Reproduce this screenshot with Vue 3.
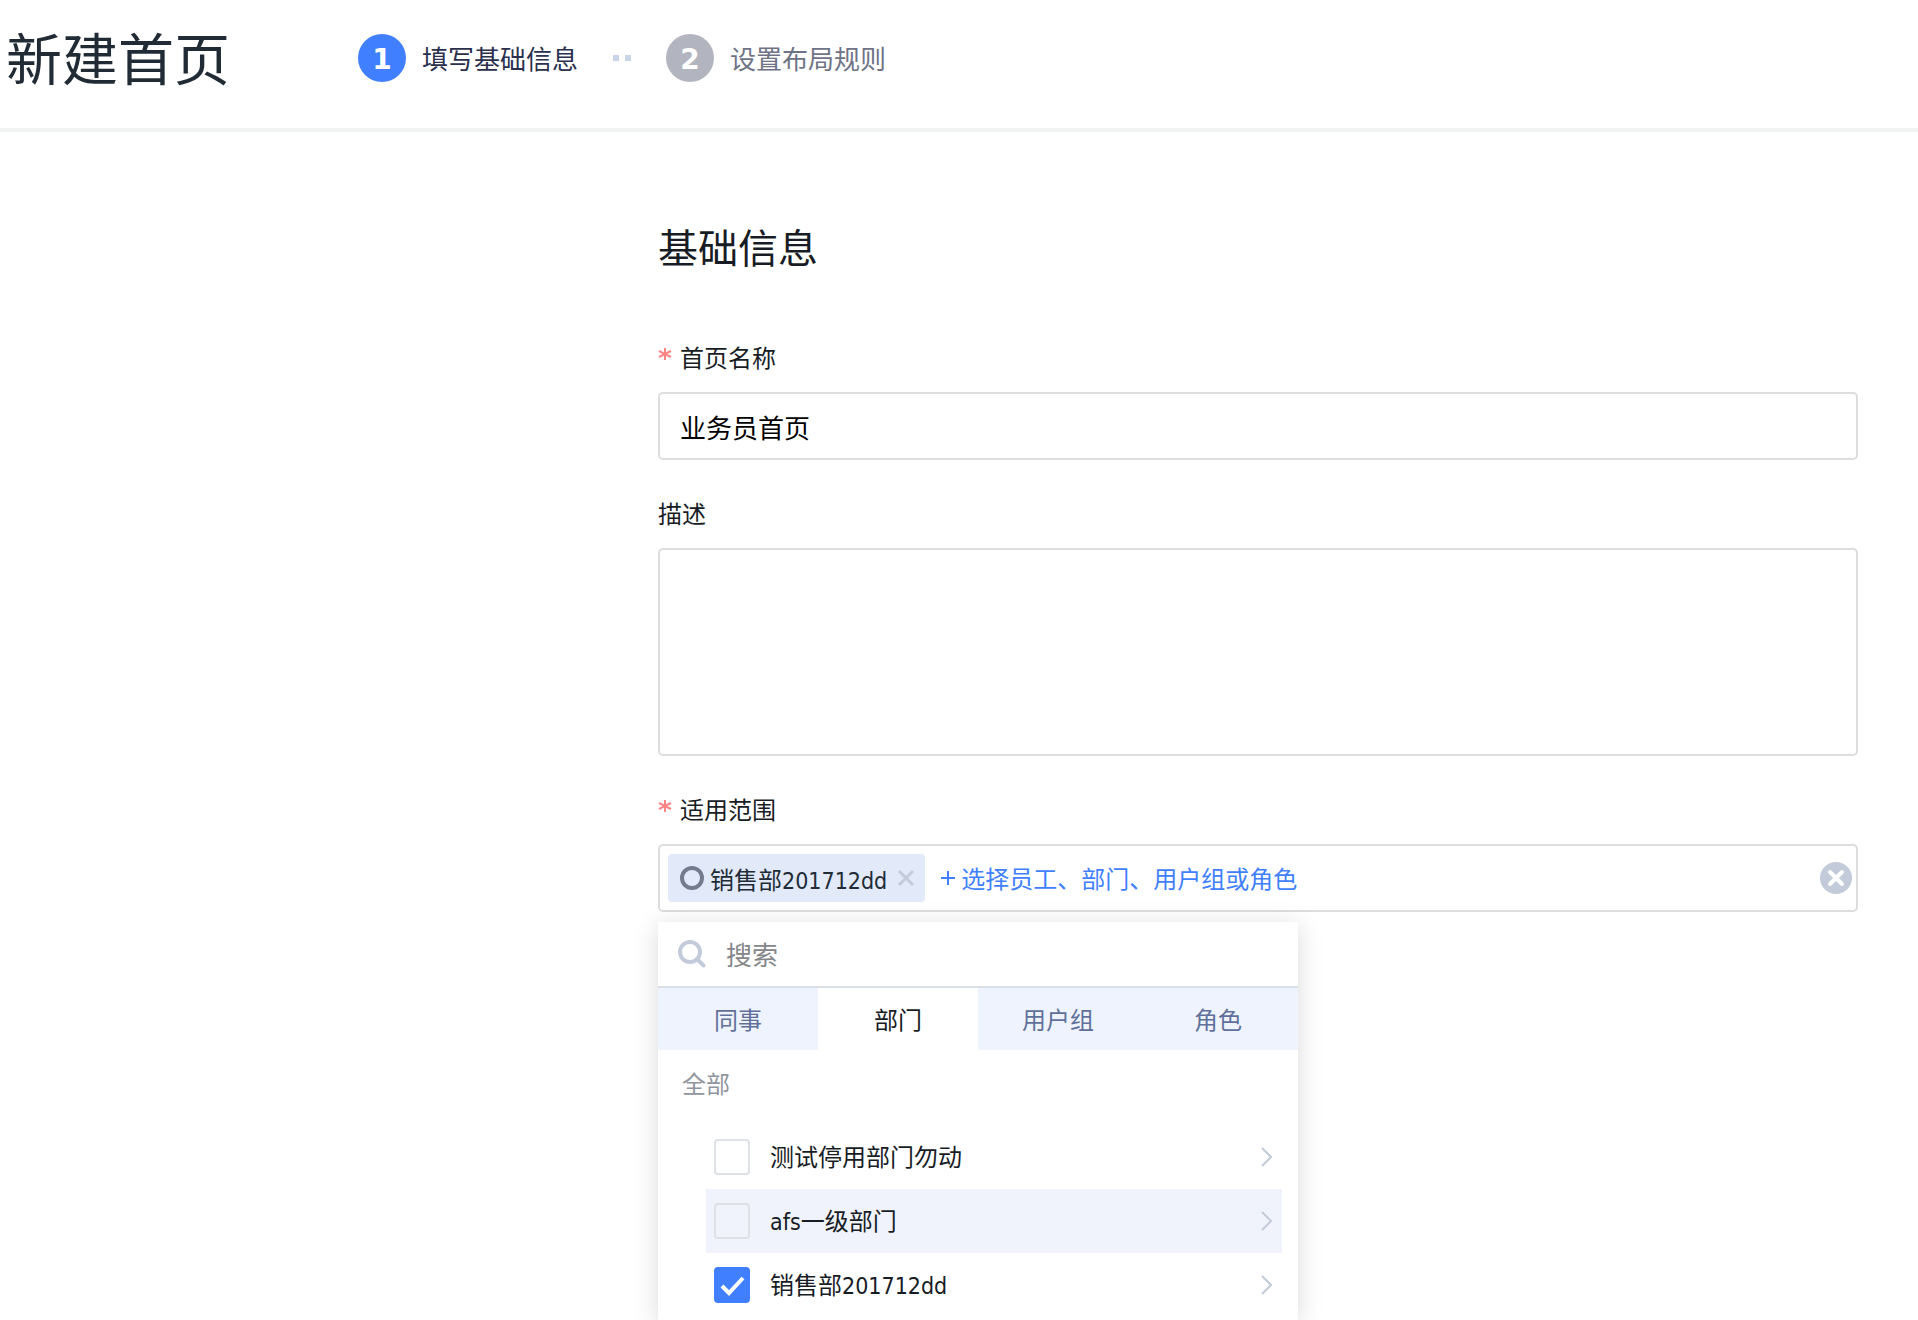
<script setup>
import { ref } from 'vue'

const name = ref('业务员首页')
const description = ref('')
const keyword = ref('')
const tabs = ['同事', '部门', '用户组', '角色']
const activeTab = ref('部门')
const departments = ref([
  { prefix: '', cjk: '测试停用部门勿动', suffix: '', checked: false, hovered: false },
  { prefix: 'afs', cjk: '一级部门', suffix: '', checked: false, hovered: true },
  { prefix: '', cjk: '销售部', suffix: '201712dd', checked: true, hovered: false }
])
</script>

<template>
  <div class="page">
    <header class="header">
      <h1 class="title">新建首页</h1>
      <ol class="steps">
        <li class="step active"><span class="num">1</span><span>填写基础信息</span></li>
        <li class="dots" aria-hidden="true"><i></i><i></i></li>
        <li class="step"><span class="num">2</span><span>设置布局规则</span></li>
      </ol>
    </header>

    <form class="form" @submit.prevent>
      <h2 class="section">基础信息</h2>

      <div class="field">
        <label class="label" for="name">
          <svg class="star" viewBox="0 0 14 14" aria-hidden="true"><path d="M7 1v12M1 4l12 6M13 4L1 10" /></svg>首页名称
        </label>
        <input id="name" v-model="name" class="box input" type="text" />
      </div>

      <div class="field">
        <label class="label" for="description">描述</label>
        <textarea id="description" v-model="description" class="box area"></textarea>
      </div>

      <div class="field">
        <span class="label">
          <svg class="star" viewBox="0 0 14 14" aria-hidden="true"><path d="M7 1v12M1 4l12 6M13 4L1 10" /></svg>适用范围
        </span>
        <div class="box picker">
          <span class="tag">
            <svg class="ring" viewBox="0 0 24 24" aria-hidden="true"><circle cx="12" cy="12" r="10" /></svg>
            <span class="tag-text">销售部<span class="latin">201712dd</span></span>
            <button class="icon-button" type="button" aria-label="移除">
              <svg class="cross" viewBox="0 0 18 18"><path d="M2 2l14 14M16 2L2 16" /></svg>
            </button>
          </span>
          <button class="add" type="button">
            <svg class="plus" viewBox="0 0 14 14" aria-hidden="true"><path d="M7 0v14M0 7h14" /></svg>选择员工、部门、用户组或角色
          </button>
          <button class="icon-button clear" type="button" aria-label="清空">
            <svg viewBox="0 0 32 32"><circle cx="16" cy="16" r="16" /><path d="M10 10l12 12M22 10L10 22" /></svg>
          </button>
        </div>

        <div class="dropdown">
          <div class="search">
            <svg class="glass" viewBox="0 0 28 28" aria-hidden="true"><circle cx="12" cy="12" r="10" /><path d="M19 19l6.500 6.500" /></svg>
            <input v-model="keyword" type="search" placeholder="搜索" aria-label="搜索" />
          </div>
          <div class="tabs">
            <button
              v-for="tab in tabs"
              :key="tab"
              type="button"
              :class="{ current: tab === activeTab }"
              @click="activeTab = tab"
            >{{ tab }}</button>
          </div>
          <p class="all">全部</p>
          <ul class="list">
            <li v-for="dept in departments" :key="dept.cjk" :class="{ hovered: dept.hovered }">
              <label>
                <input v-model="dept.checked" type="checkbox" />
                <span><span class="latin">{{ dept.prefix }}</span>{{ dept.cjk }}<span class="latin">{{ dept.suffix }}</span></span>
              </label>
              <svg class="chevron" viewBox="0 0 12 20" aria-hidden="true"><path d="M1 1l9 9-9 9" /></svg>
            </li>
          </ul>
        </div>
      </div>
    </form>
  </div>
</template>

<style>
body {
  margin: 0;
  background: #fff;
}
</style>

<style scoped>
.page {
  min-height: 100vh;
  font-family: "Noto Sans CJK SC", sans-serif;
  font-size: 24px;
  line-height: 32px;
  color: #181c25;
}
.page * {
  box-sizing: border-box;
}
button,
input,
textarea {
  font: inherit;
  color: inherit;
}
button {
  border: 0;
  padding: 0;
  background: none;
  cursor: pointer;
}
svg {
  display: block;
  flex: none;
  fill: none;
  stroke: currentColor;
}
.latin {
  font-family: "DejaVu Sans Condensed", "DejaVu Sans", sans-serif;
  font-size: 23px;
}
.header {
  display: flex;
  align-items: center;
  height: 132px;
  padding: 0 6px 12px;
  border-bottom: 4px solid #f2f3f3;
}
.title {
  margin: 0;
  padding-bottom: 4px;
  width: 352px;
  font-size: 56px;
  line-height: 80px;
  font-weight: 400;
  color: #212b36;
}
.steps {
  display: flex;
  align-items: center;
  margin: 0;
  padding: 0;
  list-style: none;
  font-size: 26px;
}
.step {
  display: flex;
  align-items: center;
  gap: 16px;
  color: #6e7386;
}
.step.active {
  color: #2a304d;
}
.num {
  width: 48px;
  height: 48px;
  border-radius: 50%;
  background: #b2b5bf;
  color: #fff;
  font-family: "DejaVu Sans", sans-serif;
  font-size: 28px;
  line-height: 52px;
  font-weight: 700;
  text-align: center;
}
.active .num {
  background: #407fff;
}
.dots {
  display: flex;
  gap: 6px;
  margin: 0 35px;
}
.dots i {
  width: 6px;
  height: 6px;
  background: #c9d4e6;
}
.form {
  margin: 0 60px 0 658px;
}
.section {
  margin: 0;
  padding: 84px 0 64px;
  font-size: 40px;
  line-height: 60px;
  font-weight: 400;
}
.field + .field {
  padding-top: 36px;
}
.label {
  display: flex;
  align-items: center;
  height: 34px;
  margin-bottom: 18px;
}
.star {
  width: 14px;
  height: 14px;
  margin: 0 8px 6px 0;
  color: #ff8585;
  stroke-width: 2;
}
.box {
  display: block;
  width: 100%;
  border: 2px solid #dcdddf;
  border-radius: 5px;
  background: #fff;
}
.input {
  height: 68px;
  padding: 0 20px;
  font-size: 26px;
  color: #000;
}
.area {
  height: 208px;
  padding: 16px 20px;
  resize: none;
}
.picker {
  display: flex;
  align-items: center;
  height: 68px;
  padding: 0 4px 0 8px;
}
.tag {
  display: flex;
  align-items: center;
  height: 48px;
  padding: 0 10px 0 12px;
  border-radius: 4px;
  background: #e2e9f9;
  color: #212b36;
}
.ring {
  width: 24px;
  height: 24px;
  margin-right: 6px;
  color: #737c8c;
  stroke-width: 4;
}
.tag-text {
  padding-top: 4px;
  margin-right: 10px;
}
.cross {
  width: 18px;
  height: 18px;
  color: #c3ccd9;
  stroke-width: 3;
}
.add {
  display: flex;
  align-items: center;
  gap: 6px;
  margin-left: 16px;
  color: #407fff;
}
.plus {
  width: 14px;
  height: 14px;
  stroke-width: 2;
}
.clear {
  margin-left: auto;
}
.clear svg {
  width: 32px;
  height: 32px;
  stroke-width: 4;
  stroke-linecap: round;
}
.clear circle {
  fill: #c3cad9;
  stroke: none;
}
.clear path {
  stroke: #fff;
}
.dropdown {
  width: 640px;
  margin-top: 10px;
  padding-bottom: 3px;
  background: #fff;
  box-shadow: 0 4px 24px rgba(0, 0, 0, 0.15);
}
.search {
  display: flex;
  align-items: center;
  height: 66px;
  padding: 0 20px;
  border-bottom: 2px solid #dadfe6;
}
.glass {
  width: 28px;
  height: 28px;
  margin-right: 20px;
  color: #c3cad9;
  stroke-width: 4;
  stroke-linecap: round;
}
.search input {
  flex: 1;
  border: 0;
  padding: 0;
  outline: 0;
  background: none;
  font-size: 26px;
}
.search input::placeholder {
  color: #85868a;
}
.tabs {
  display: grid;
  grid-template-columns: repeat(4, 1fr);
  height: 62px;
}
.tabs button {
  background: #eff3fd;
  color: #60709b;
}
.tabs .current {
  background: #fff;
  color: #181c25;
}
.all {
  margin: 0;
  padding: 16px 24px 25px;
  line-height: 34px;
  color: #91959e;
}
.list {
  margin: 0 16px 0 48px;
  padding: 0;
  list-style: none;
}
.list li {
  display: flex;
  align-items: center;
  justify-content: space-between;
  height: 64px;
  padding: 0 9px 0 8px;
}
.list .hovered {
  background: #f0f3fc;
}
.list label {
  display: flex;
  align-items: center;
  gap: 20px;
}
.list input {
  appearance: none;
  width: 36px;
  height: 36px;
  margin: 0;
  border: 2px solid #dee1e6;
  border-radius: 4px;
}
.list input:checked {
  border-color: #407fff;
  background: #407fff url("data:image/svg+xml,%3Csvg xmlns='http://www.w3.org/2000/svg' viewBox='0 0 32 32'%3E%3Cpath d='M6 17l7 7L27 9' fill='none' stroke='%23fff' stroke-width='4'/%3E%3C/svg%3E") center / 32px no-repeat;
}
.chevron {
  width: 12px;
  height: 20px;
  color: #c3cad9;
  stroke-width: 2;
}
</style>
